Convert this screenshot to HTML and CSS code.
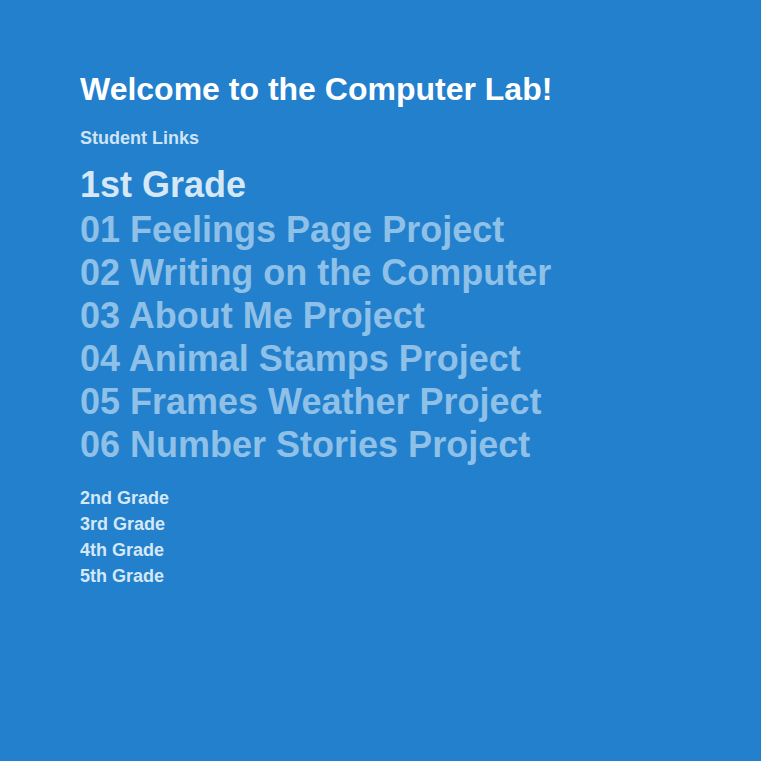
FILE: index.html
```html
<!DOCTYPE html>
<html>
<head>
<meta charset="utf-8">
<link rel="stylesheet" href="styles.css">
</head>
<body>
<main class="page">
  <h1 class="title">Welcome to the Computer Lab!</h1>
  <p class="subtitle">Student Links</p>
  <h2 class="grade">1st Grade</h2>
  <ul class="projects">
    <li>01 Feelings Page Project</li>
    <li>02 Writing on the Computer</li>
    <li>03 About Me Project</li>
    <li>04 Animal Stamps Project</li>
    <li>05 Frames Weather Project</li>
    <li>06 Number Stories Project</li>
  </ul>
  <ul class="grades">
    <li>2nd Grade</li>
    <li>3rd Grade</li>
    <li>4th Grade</li>
    <li>5th Grade</li>
  </ul>
</main>
</body>
</html>
```
FILE: styles.css
```css
html, body {
  margin: 0;
  padding: 0;
  background: #2380cc;
  height: 100%;
}
body {
  font-family: "Liberation Sans", Arial, sans-serif;
  font-weight: bold;
}
.page {
  padding: 70px 80px 0 80px;
}
.title {
  margin: 0;
  font-size: 32px;
  line-height: 38px;
  color: #ffffff;
}
.subtitle {
  margin: 19px 0 0 0;
  font-size: 18px;
  line-height: 22px;
  color: #cfe4f5;
}
.grade {
  margin: 14px 0 0 0;
  font-size: 36px;
  line-height: 44px;
  color: #d4e8f7;
}
.projects {
  list-style: none;
  margin: 1px 0 0 0;
  padding: 0;
}
.projects li {
  font-size: 36px;
  line-height: 43px;
  color: #8ec0e8;
}
.grades {
  list-style: none;
  margin: 19px 0 0 0;
  padding: 0;
}
.grades li {
  font-size: 18px;
  line-height: 26px;
  color: #d4e8f7;
}
```
